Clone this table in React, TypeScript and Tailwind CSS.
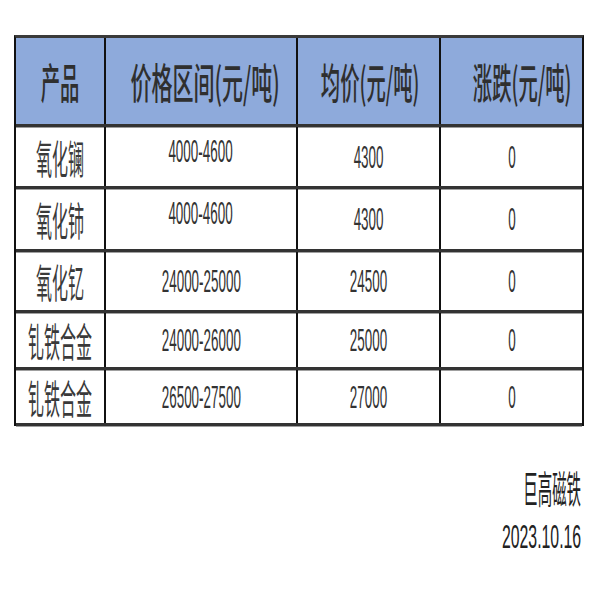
import React from 'react';

const cjk = "font-['Noto_Sans_CJK_SC',sans-serif]";
const num = "font-['Liberation_Sans',Arial,sans-serif]";

type Row = { name: string; range: string; avg: string; change: string; h: string; lift?: boolean };

const rows: Row[] = [
  { name: '氧化镧', range: '4000-4600', avg: '4300', change: '0', h: 'h-[62px]', lift: true },
  { name: '氧化铈', range: '4000-4600', avg: '4300', change: '0', h: 'h-[63px]', lift: true },
  { name: '氧化钇', range: '24000-25000', avg: '24500', change: '0', h: 'h-[61px]' },
  { name: '钆铁合金', range: '24000-26000', avg: '25000', change: '0', h: 'h-[57px]' },
  { name: '钆铁合金', range: '26500-27500', avg: '27000', change: '0', h: 'h-[56px]' },
];

// fixed column widths, never shrink
const c1 = 'w-[88px] shrink-0 min-w-0 flex items-center justify-center';
const c2 = 'w-[192px] shrink-0 min-w-0 flex items-center justify-center border-l-2 border-[#111]';
const c3 = 'w-[143px] shrink-0 min-w-0 flex items-center justify-center border-l-2 border-[#111]';
const c4 = 'w-[143px] shrink-0 min-w-0 flex items-center justify-center border-l-2 border-[#111]';

function Name({ children }: { children: string }) {
  return (
    <span className={`${cjk} inline-block shrink-0 whitespace-nowrap text-[40px] leading-none text-[#3a3a3a] scale-x-[0.4]`}>
      {children}
    </span>
  );
}

function Num({ children, lift }: { children: string; lift?: boolean }) {
  return (
    <span
      className={`${num} inline-block shrink-0 whitespace-nowrap text-[32px] leading-none text-[#333] scale-x-[0.42] ${
        lift ? 'mb-[12px]' : ''
      }`}
    >
      {children}
    </span>
  );
}

function Head({ children, wide }: { children: string; wide?: boolean }) {
  return (
    <span
      className={`${cjk} inline-block shrink-0 whitespace-nowrap text-[42px] font-medium leading-none text-[#2f2f2f] ${
        wide ? 'scale-x-[0.5]' : 'scale-x-[0.46]'
      }`}
    >
      {children}
    </span>
  );
}

export default function App() {
  return (
    <div className="w-[600px] h-[600px] bg-white pt-[35px] pl-[14px]">
      <div className="w-[570px] border-x-2 border-[#111] border-t-[3px] border-t-[#3a3a3a]">
        {/* header */}
        <div className="flex h-[89px] bg-[#8eaadb] border-b-[3px] border-[#333] shadow-[0_1px_0_#9c9c9c]">
          <div className={c1}>
            <Head>产品</Head>
          </div>
          <div className={`${c2} pl-[8px]`}>
            <Head wide>价格区间(元/吨)</Head>
          </div>
          <div className={`${c3} pl-[4px]`}>
            <Head>均价(元/吨)</Head>
          </div>
          <div className={`${c4} pl-[22px]`}>
            <Head>涨跌(元/吨)</Head>
          </div>
        </div>

        {rows.map((r, i) => (
          <div key={i} className={`flex ${r.h} border-b-[3px] border-[#333] shadow-[0_1px_0_#a0a0a0]`}>
            <div className={c1}>
              <Name>{r.name}</Name>
            </div>
            <div className={c2}>
              <Num lift={r.lift}>{r.range}</Num>
            </div>
            <div className={c3}>
              <Num>{r.avg}</Num>
            </div>
            <div className={c4}>
              <Num>{r.change}</Num>
            </div>
          </div>
        ))}
      </div>

      <div className="w-[567px] mt-[42px] flex flex-col items-end">
        <span className={`${cjk} inline-block whitespace-nowrap text-[38px] leading-none text-[#222] origin-right scale-x-[0.38]`}>
          巨高磁铁
        </span>
        <span className={`${num} mt-[14px] inline-block whitespace-nowrap text-[33px] leading-none text-[#222] origin-right scale-x-[0.48]`}>
          2023.10.16
        </span>
      </div>
    </div>
  );
}
